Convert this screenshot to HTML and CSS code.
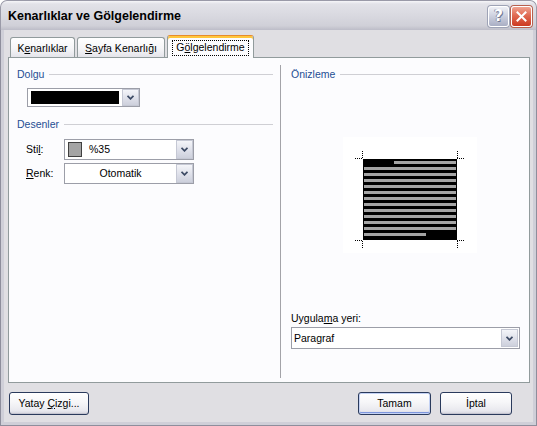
FILE: index.html
```html
<!DOCTYPE html>
<html lang="tr">
<head>
<meta charset="utf-8">
<title>Kenarlıklar ve Gölgelendirme</title>
<link rel="stylesheet" href="styles.css">
</head>
<body>
<div class="window">
  <div class="titlebar">
    <span class="title">Kenarlıklar ve Gölgelendirme</span>
    <div class="caption-buttons">
      <span class="cap-btn help">?</span>
      <span class="cap-btn close">
        <svg width="11" height="11" viewBox="0 0 11 11"><path d="M1.5 1.5 L9.5 9.5 M9.5 1.5 L1.5 9.5" stroke="#fff" stroke-width="2" stroke-linecap="square" fill="none"/></svg>
      </span>
    </div>
  </div>
  <div class="frame">
    <div class="client">
      <div class="tabs">
        <div class="tab tab-borders"><span>K<u>e</u>narlıklar</span></div>
        <div class="tab tab-page"><span><u>S</u>ayfa Kenarlığı</span></div>
        <div class="tab tab-shading active"><span class="focus">G<u>ö</u>lgelendirme</span></div>
      </div>
      <div class="panel">
        <div class="col col-left">
          <div class="group-head"><span>Dolgu</span><i class="rule"></i></div>
          <div class="combo fill-combo">
            <span class="swatch-black"></span>
            <span class="drop"><svg width="7" height="5" viewBox="0 0 7 5"><path d="M0.5 0.8 L3.5 3.8 L6.5 0.8" stroke="#3c4a64" stroke-width="1.8" fill="none"/></svg></span>
          </div>
          <div class="group-head group-patterns"><span>Desenler</span><i class="rule"></i></div>
          <div class="field field-style">
            <label>Sti<u>l</u>:</label>
            <div class="combo field-combo">
              <span class="swatch-grey"></span>
              <span class="value">%35</span>
              <span class="drop"><svg width="7" height="5" viewBox="0 0 7 5"><path d="M0.5 0.8 L3.5 3.8 L6.5 0.8" stroke="#3c4a64" stroke-width="1.8" fill="none"/></svg></span>
            </div>
          </div>
          <div class="field field-color">
            <label><u>R</u>enk:</label>
            <div class="combo field-combo">
              <span class="value centered">Otomatik</span>
              <span class="drop"><svg width="7" height="5" viewBox="0 0 7 5"><path d="M0.5 0.8 L3.5 3.8 L6.5 0.8" stroke="#3c4a64" stroke-width="1.8" fill="none"/></svg></span>
            </div>
          </div>
        </div>
        <div class="divider"></div>
        <div class="col col-right">
          <div class="group-head"><span>Önizleme</span><i class="rule"></i></div>
          <div class="preview">
            <svg width="134" height="116" viewBox="0 0 134 116">
              <rect x="20" y="22" width="94" height="81" fill="#000"/>
              <g fill="#a4a4a4">
                <rect x="51" y="24" width="62" height="3"/>
                <rect x="21" y="30" width="92" height="3"/>
                <rect x="21" y="36" width="92" height="3"/>
                <rect x="21" y="42" width="92" height="3"/>
                <rect x="21" y="48" width="92" height="3"/>
                <rect x="21" y="54" width="92" height="3"/>
                <rect x="21" y="60" width="92" height="3"/>
                <rect x="21" y="66" width="92" height="3"/>
                <rect x="21" y="72" width="92" height="3"/>
                <rect x="21" y="78" width="92" height="3"/>
                <rect x="21" y="84" width="92" height="3"/>
                <rect x="21" y="90" width="92" height="3"/>
                <rect x="21" y="96" width="62" height="3"/>
              </g>
              <g stroke="#000" stroke-width="1" stroke-dasharray="1 1" fill="none">
                <path d="M12 21.5 H20 M19.5 14 V21"/>
                <path d="M114 21.5 H122 M114.5 14 V21"/>
                <path d="M12 103.5 H20 M19.5 104 V111"/>
                <path d="M114 103.5 H122 M114.5 104 V111"/>
              </g>
            </svg>
          </div>
          <div class="apply-label">Uygula<u>m</u>a yeri:</div>
          <div class="combo apply-combo">
            <span class="value">Paragraf</span>
            <span class="drop"><svg width="7" height="5" viewBox="0 0 7 5"><path d="M0.5 0.8 L3.5 3.8 L6.5 0.8" stroke="#3c4a64" stroke-width="1.8" fill="none"/></svg></span>
          </div>
        </div>
      </div>
      <div class="buttons">
        <button class="btn btn-rule">Yatay <u>Ç</u>izgi...</button>
        <span class="spacer"></span>
        <button class="btn btn-ok">Tamam</button>
        <button class="btn btn-cancel">İptal</button>
      </div>
    </div>
  </div>
</div>
</body>
</html>
```

FILE: styles.css
```css
* { box-sizing: border-box; }

html, body {
  margin: 0;
  padding: 0;
}

body {
  width: 537px;
  height: 426px;
  overflow: hidden;
  background: #ffffff;
  font-family: "Liberation Sans", Arial, sans-serif;
  font-size: 10.5px;
  line-height: 13px;
  color: #000;
}

u { text-decoration: underline; text-underline-offset: 1px; }

/* ---- window chrome ---- */
.window {
  width: 537px;
  height: 426px;
  display: flex;
  flex-direction: column;
  border-radius: 7px 7px 0 0;
  overflow: hidden;
  background: #c9c9d3;
}

.titlebar {
  height: 30px;
  flex: none;
  display: flex;
  align-items: center;
  padding: 0 4px 0 7px;
  background: linear-gradient(#f6f6f9 0, #e2e2e8 3px, #dadae1 45%, #d0d0d8 85%, #bdbdc8 100%);
  border-left: 1px solid #9a9aa8;
  border-right: 1px solid #9a9aa8;
  border-top: 1px solid #9a9aa8;
  border-radius: 7px 7px 0 0;
}

.title {
  flex: 1;
  font-weight: bold;
  font-size: 12.5px;
  padding-top: 2px;
}

.caption-buttons {
  display: flex;
  gap: 2px;
  padding-top: 2px;
}

.cap-btn {
  width: 21px;
  height: 21px;
  border-radius: 3px;
  border: 1px solid #ffffff;
  display: flex;
  align-items: center;
  justify-content: center;
}

.help {
  background: linear-gradient(#eef0f6, #c4c8d8 60%, #a9aec4);
  color: #fff;
  font-weight: bold;
  font-size: 15px;
  font-family: "DejaVu Sans", sans-serif;
  text-shadow: 1px 1px 0 #6f7894, -1px 0 0 #8c93ac;
  box-shadow: 0 0 0 1px #9ea3b6;
}

.close {
  background: linear-gradient(#f0a290, #e06a52 45%, #cc3a22);
  box-shadow: 0 0 0 1px #b8604e;
}

.frame {
  flex: 1;
  display: flex;
  padding: 0 3px 3px;
  border-left: 1px solid #8e8e9c;
  border-right: 1px solid #8e8e9c;
  border-bottom: 1px solid #8e8e9c;
  background: #cfcfd8;
}

.client {
  flex: 1;
  display: flex;
  flex-direction: column;
  padding-top: 5px;
  background: #e0dfe3;
}

/* ---- tabs ---- */
.tabs {
  display: flex;
  align-items: flex-end;
  gap: 2px;
  height: 23px;
  margin: 0 0 -1px 6px;
}

.tab {
  height: 20px;
  margin-bottom: 1px;
  border: 1px solid #919b9c;
  border-bottom: none;
  border-radius: 3px 3px 0 0;
  background: linear-gradient(#ffffff, #f6f6f8 55%, #e4e4ea);
  display: flex;
  align-items: center;
  justify-content: center;
  padding-top: 2px;
}

.tab-borders { width: 65px; }
.tab-page { width: 88px; }

.tab.active {
  position: relative;
  z-index: 1;
  width: 87px;
  height: 23px;
  margin-bottom: 0;
  background: #fcfcfe;
  border-top: 1px solid #e68b2c;
  box-shadow: inset 0 2px 0 #ffc73c;
  padding-top: 2px;
}

.focus {
  outline: 1px dotted #000;
  padding: 0 3px 1px;
}

/* ---- panel ---- */
.panel {
  margin-left: 4px;
  width: 522px;
  height: 326px;
  border: 1px solid #919b9c;
  background: #fcfcfe;
  display: flex;
  padding: 7px 0 4px;
}

.col { display: flex; flex-direction: column; }
.col-left { width: 271px; padding: 0 7px 0 8px; }
.col-right { width: 248px; padding: 0 9px 0 10px; }

.divider {
  width: 1px;
  background: #a3a3a8;
}

.group-head {
  display: flex;
  align-items: center;
  height: 13px;
  margin-top: 3px;
  color: #1f4f94;
}

.rule {
  flex: 1;
  height: 1px;
  margin-left: 5px;
  background: #cfcfd4;
}

.group-patterns { margin-top: 11px; }

/* ---- combo boxes ---- */
.combo {
  display: flex;
  align-items: center;
  border: 1px solid #9c9ea8;
  background: #ffffff;
}

.drop {
  margin-left: auto;
  width: 17px;
  align-self: stretch;
  display: flex;
  align-items: center;
  justify-content: center;
  border: 1px solid #ffffff;
  outline: 1px solid #c5c8d4;
  outline-offset: -1px;
  background: linear-gradient(#f4f5f9, #dcdee8 60%, #cdd0dc);
}

.fill-combo {
  width: 113px;
  height: 19px;
  margin: 7px 0 0 10px;
}

.swatch-black {
  width: 88px;
  height: 13px;
  margin-left: 3px;
  background: #000;
}

.field {
  display: flex;
  align-items: center;
  height: 21px;
  margin-left: 9px;
}

.field label { width: 38px; }
.field-style { margin-top: 8px; }
.field-color { margin-top: 3px; }

.field-combo {
  width: 130px;
  height: 21px;
}

.swatch-grey {
  width: 14px;
  height: 15px;
  margin-left: 3px;
  background: #a4a4a4;
  border: 1px solid #404040;
}

.value { margin-left: 7px; }
.value.centered { flex: 1; margin-left: 0; text-align: center; }

/* ---- preview ---- */
.preview {
  width: 134px;
  height: 116px;
  margin: 56px 0 0 52px;
  background: #ffffff;
}

.preview svg { display: block; }

.apply-label {
  margin-top: 59px;
  height: 13px;
}

.apply-combo {
  width: 229px;
  height: 22px;
  margin-top: 2px;
  padding: 1px;
}

.apply-combo .value { margin-left: 1px; }

/* ---- bottom buttons ---- */
.buttons {
  display: flex;
  height: 23px;
  margin-top: 9px;
  padding: 0 21px 0 5px;
}

.spacer { flex: 1; }

.btn {
  height: 23px;
  padding: 0;
  font: inherit;
  color: #000;
  border: 1px solid #2a3a5c;
  border-radius: 3px;
  background: linear-gradient(#ffffff, #f6f6f8 45%, #e8e8ee 85%, #d2d2dc);
  box-shadow: inset 0 -1px 0 #c4c4d0;
}

.btn-rule { width: 80px; }
.btn-ok { width: 73px; box-shadow: inset 0 0 0 1px #c4d2f4, inset 0 -2px 0 #7d96de; }
.btn-cancel { width: 72px; margin-left: 9px; }
```
